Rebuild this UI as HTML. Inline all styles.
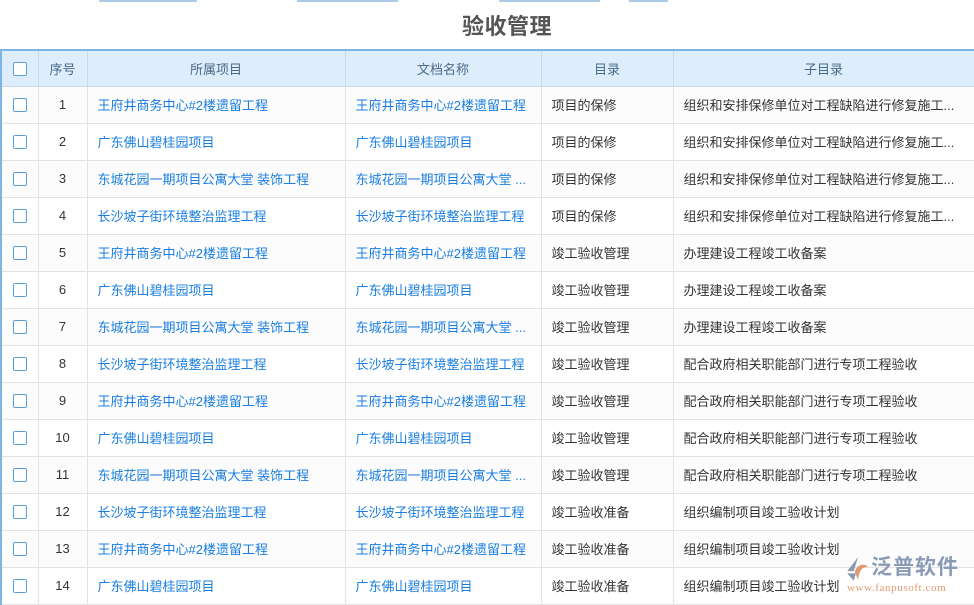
<!DOCTYPE html>
<html><head><meta charset="utf-8"><style>
*{margin:0;padding:0;box-sizing:border-box}
body{width:974px;height:602px;overflow:hidden;background:#fff;font-family:"Liberation Sans","Noto Sans CJK SC",sans-serif;font-size:13px;color:#333;position:relative}
.seg{position:absolute;top:0;height:2px;background:#a9cbe8}
h1{position:absolute;top:9px;left:0;width:1014px;text-align:center;font-size:22px;font-weight:bold;color:#555;letter-spacing:0.5px}
table{position:absolute;left:0px;top:49px;border-collapse:collapse;table-layout:fixed;width:973px}
th{background:#deedfb;color:#4a6a8a;font-weight:normal;height:36px;border:1px solid #c4d9ec;border-top:2px solid #7fb5e5}
td{height:37px;border:1px solid #e3e3e3;white-space:nowrap;overflow:hidden;text-overflow:ellipsis;padding:0 10px}
th:first-child,td:first-child{border-left:2px solid #7fb5e5}
th:last-child,td:last-child{border-right:1px solid #c4d9ec}
td.c,th.c{text-align:center;padding:0}
td.b{color:#1a7ee0}
.cb{display:inline-block;width:14px;height:14px;border:1.5px solid #5a9fdc;border-radius:2px;vertical-align:middle;background:#fff}
tr:nth-child(even) td{background:#fcfcfd}
.logo{position:absolute;left:845px;top:553px;width:125px;height:45px}
</style></head><body>
<div class="seg" style="left:99px;width:98px"></div>
<div class="seg" style="left:297px;width:101px"></div>
<div class="seg" style="left:499px;width:101px"></div>
<div class="seg" style="left:629px;width:39px"></div>
<h1>验收管理</h1>
<table>
<colgroup><col style="width:37px"><col style="width:49px"><col style="width:258px"><col style="width:196px"><col style="width:132px"><col style="width:301px"></colgroup>
<tr><th class="c"><span class="cb"></span></th><th class="c">序号</th><th>所属项目</th><th>文档名称</th><th>目录</th><th>子目录</th></tr>
<tr><td class="c"><span class="cb"></span></td><td class="c">1</td><td class="b">王府井商务中心#2楼遗留工程</td><td class="b">王府井商务中心#2楼遗留工程</td><td>项目的保修</td><td>组织和安排保修单位对工程缺陷进行修复施工...</td></tr>
<tr><td class="c"><span class="cb"></span></td><td class="c">2</td><td class="b">广东佛山碧桂园项目</td><td class="b">广东佛山碧桂园项目</td><td>项目的保修</td><td>组织和安排保修单位对工程缺陷进行修复施工...</td></tr>
<tr><td class="c"><span class="cb"></span></td><td class="c">3</td><td class="b">东城花园一期项目公寓大堂 装饰工程</td><td class="b">东城花园一期项目公寓大堂 ...</td><td>项目的保修</td><td>组织和安排保修单位对工程缺陷进行修复施工...</td></tr>
<tr><td class="c"><span class="cb"></span></td><td class="c">4</td><td class="b">长沙坡子街环境整治监理工程</td><td class="b">长沙坡子街环境整治监理工程</td><td>项目的保修</td><td>组织和安排保修单位对工程缺陷进行修复施工...</td></tr>
<tr><td class="c"><span class="cb"></span></td><td class="c">5</td><td class="b">王府井商务中心#2楼遗留工程</td><td class="b">王府井商务中心#2楼遗留工程</td><td>竣工验收管理</td><td>办理建设工程竣工收备案</td></tr>
<tr><td class="c"><span class="cb"></span></td><td class="c">6</td><td class="b">广东佛山碧桂园项目</td><td class="b">广东佛山碧桂园项目</td><td>竣工验收管理</td><td>办理建设工程竣工收备案</td></tr>
<tr><td class="c"><span class="cb"></span></td><td class="c">7</td><td class="b">东城花园一期项目公寓大堂 装饰工程</td><td class="b">东城花园一期项目公寓大堂 ...</td><td>竣工验收管理</td><td>办理建设工程竣工收备案</td></tr>
<tr><td class="c"><span class="cb"></span></td><td class="c">8</td><td class="b">长沙坡子街环境整治监理工程</td><td class="b">长沙坡子街环境整治监理工程</td><td>竣工验收管理</td><td>配合政府相关职能部门进行专项工程验收</td></tr>
<tr><td class="c"><span class="cb"></span></td><td class="c">9</td><td class="b">王府井商务中心#2楼遗留工程</td><td class="b">王府井商务中心#2楼遗留工程</td><td>竣工验收管理</td><td>配合政府相关职能部门进行专项工程验收</td></tr>
<tr><td class="c"><span class="cb"></span></td><td class="c">10</td><td class="b">广东佛山碧桂园项目</td><td class="b">广东佛山碧桂园项目</td><td>竣工验收管理</td><td>配合政府相关职能部门进行专项工程验收</td></tr>
<tr><td class="c"><span class="cb"></span></td><td class="c">11</td><td class="b">东城花园一期项目公寓大堂 装饰工程</td><td class="b">东城花园一期项目公寓大堂 ...</td><td>竣工验收管理</td><td>配合政府相关职能部门进行专项工程验收</td></tr>
<tr><td class="c"><span class="cb"></span></td><td class="c">12</td><td class="b">长沙坡子街环境整治监理工程</td><td class="b">长沙坡子街环境整治监理工程</td><td>竣工验收准备</td><td>组织编制项目竣工验收计划</td></tr>
<tr><td class="c"><span class="cb"></span></td><td class="c">13</td><td class="b">王府井商务中心#2楼遗留工程</td><td class="b">王府井商务中心#2楼遗留工程</td><td>竣工验收准备</td><td>组织编制项目竣工验收计划</td></tr>
<tr><td class="c"><span class="cb"></span></td><td class="c">14</td><td class="b">广东佛山碧桂园项目</td><td class="b">广东佛山碧桂园项目</td><td>竣工验收准备</td><td>组织编制项目竣工验收计划</td></tr>
</table>
<div class="logo">
<svg width="24" height="26" style="position:absolute;left:0;top:3px" viewBox="0 0 22 24"><path d="M12 1 L2 14 L8 14 Z" fill="#8a99b5"/><path d="M9 15 C10 8 18 6 21 10 C16 10 13 13 12 22 Z" fill="#e39a73"/><path d="M2 16 L10 16 L8 23 Z" fill="#8a99b5"/></svg>
<div style="position:absolute;left:26px;top:1px;font-size:21px;color:#8a99b5;letter-spacing:1px;font-weight:bold;line-height:28px">泛普软件</div>
<div style="position:absolute;left:2px;top:29px;font-size:11px;color:#e39a73;font-family:'Liberation Serif',serif;letter-spacing:0.6px">www.fanpusoft.com</div>
</div>
</body></html>
